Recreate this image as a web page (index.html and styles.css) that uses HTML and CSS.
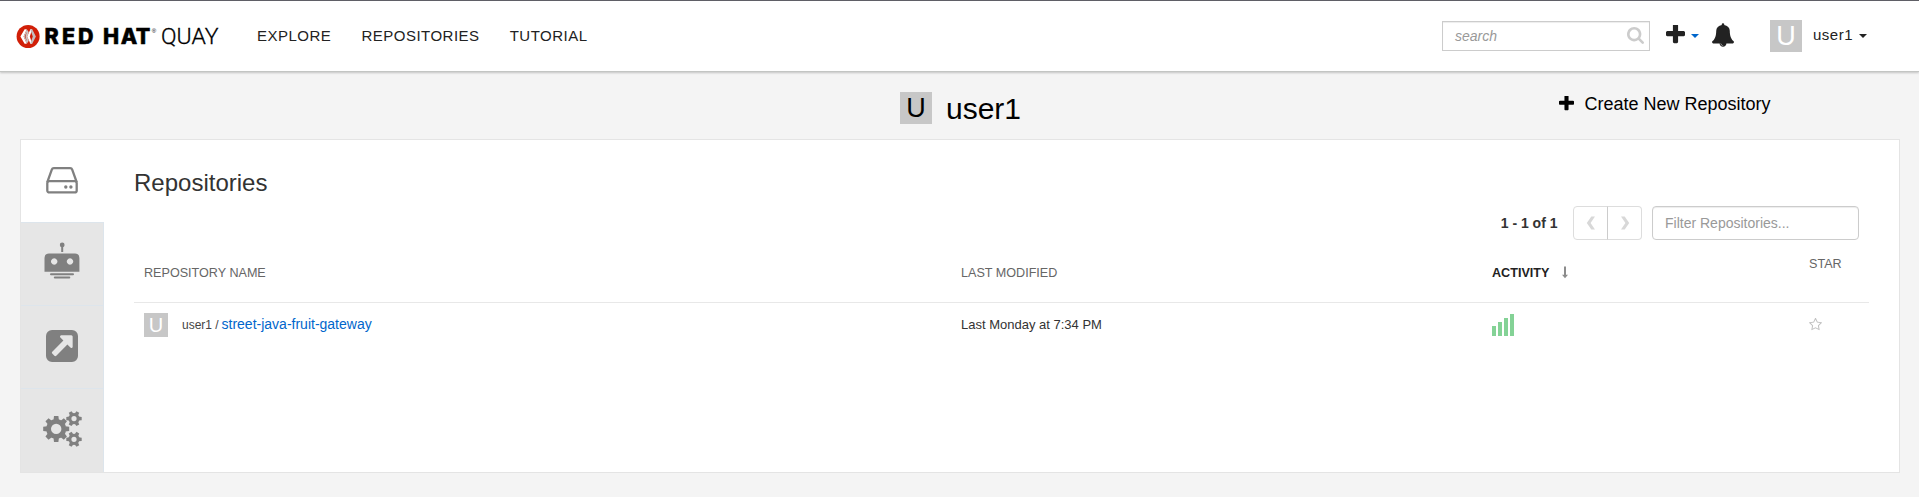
FILE: index.html
```html
<!DOCTYPE html>
<html lang="en">
<head>
<meta charset="utf-8">
<title>user1 · Quay</title>
<link rel="stylesheet" href="styles.css">
</head>
<body>
<svg width="0" height="0" class="defs">
  <symbol id="plus" viewBox="192 192 1408 1408"><path d="M1600 736v192q0 40-28 68t-68 28h-416v416q0 40-28 68t-68 28h-192q-40 0-68-28t-28-68v-416h-416q-40 0-68-28t-28-68v-192q0-40 28-68t68-28h416v-416q0-40 28-68t68-28h192q40 0 68 28t28 68v416h416q40 0 68 28t28 68z"/></symbol>
</svg>
<header class="header">
  <a class="logo">
    <svg width="210" height="30" viewBox="10 21 210 30">
      <circle cx="28.1" cy="36.5" r="11.5" fill="#d11f08"/>
      <path d="M24.600 29.300h2.200l-3.200 7.200 3.200 7.200h-2.200l-4.200-7.200z" fill="#fff"/>
      <path d="M26.800 29.300l2 3-1.600 4.200 1.600 4.200-2 3-3.200-7.200z" fill="#c9c4c4"/>
      <path d="M27 31.500l-1.500 5 1.500 5-2.300-5z" fill="#d11f08"/>
      <path d="M30.400 29.300h1.800l-2.400 7.200 2.400 7.200h-1.800l-3.200-7.200z" fill="#fff"/>
      <path d="M32.200 29.300l3.700 7.200-3.700 7.200h-2l2.600-7.200-2.600-7.200z" fill="#c5bfbf"/>
      <text x="44.500 62 78" y="44" class="logo-bold">RED</text>
      <text x="103 120.800 135.700" y="44" class="logo-bold">HAT</text>
      <text x="151.7" y="33" class="logo-reg">®</text>
      <text x="161" y="44" class="logo-thin" textLength="57.5" lengthAdjust="spacingAndGlyphs">QUAY</text>
    </svg>
  </a>
  <nav class="nav"><a>EXPLORE</a><a>REPOSITORIES</a><a>TUTORIAL</a></nav>
  <div class="search">
    <span>search</span>
    <svg width="17" height="17" viewBox="64 128 1664 1664"><path fill="#ccc" d="M1216 832q0-185-131.5-316.5t-316.5-131.5-316.5 131.5-131.5 316.5 131.5 316.5 316.5 131.5 316.5-131.5 131.5-316.5zm512 832q0 52-38 90t-90 38q-54 0-90-38l-343-342q-179 124-399 124-143 0-273.5-55.5t-225-150-150-225-55.5-273.5 55.5-273.5 150-225 225-150 273.5-55.5 273.5 55.5 225 150 150 225 55.5 273.5q0 220-124 399l343 343q37 37 37 90z"/></svg>
  </div>
  <svg class="add" width="19" height="19"><use href="#plus"/></svg>
  <i class="caret caret-blue"></i>
  <svg class="bell" width="22" height="24" viewBox="64 0 1664 1792"><path d="M912 1696q0-16-16-16-59 0-101.5-42.5t-42.5-101.5q0-16-16-16t-16 16q0 73 51.5 124.5t124.5 51.5q16 0 16-16zm816-288q0 52-38 90t-90 38h-448q0 106-75 181t-181 75-181-75-75-181h-448q-52 0-90-38t-38-90q50-42 91-88t85-119.5 74.5-158.5 50-206 19.5-260q0-152 117-282.5t307-158.5q-8-19-8-39 0-40 28-68t68-28 68 28 28 68q0 20-8 39 190 28 307 158.5t117 282.5q0 139 19.5 260t50 206 74.5 158.5 85 119.5 91 88z"/></svg>
  <span class="avatar avatar-menu">U</span>
  <span class="account">user1</span>
  <i class="caret caret-dark"></i>
</header>

<div class="titlebar">
  <div></div>
  <h1 class="title"><span class="avatar avatar-title">U</span>user1</h1>
  <a class="create"><svg width="15" height="15"><use href="#plus"/></svg>Create New Repository</a>
</div>

<main class="panel">
  <aside class="tabs">
    <a class="tab active">
      <svg width="32" height="27" viewBox="0 0 32 27" fill="none" stroke="#808080" stroke-width="2.300"><path d="M1.3 15.2L5.8 2.6Q6.3 1.2 7.8 1.2h16.4q1.5 0 2 1.4L30.7 15.2"/><rect x="1.3" y="14.2" width="29.4" height="11.2" rx="2"/><g fill="#808080" stroke="none"><circle cx="19.8" cy="20" r="1.7"/><circle cx="24.9" cy="20" r="1.7"/></g></svg>
    </a>
    <a class="tab robot">
      <svg width="36" height="37" viewBox="0 0 36 37" fill="#808080"><circle cx="18.2" cy="2.900" r="2.4"/><path d="M17.2 4h2v6h-2z"/><path fill-rule="evenodd" d="M5 11.5h26q4.4 0 4.4 4.4V29.8H.5V15.9Q.5 11.500 5 11.500zM10.200 16.300a3.200 3.200 0 1 0 .01 0zM26 16.300a3.200 3.200 0 1 0 .01 0z"/><rect x="6" y="31.200" width="24" height="2" rx="1"/><rect x="9.800" y="34.600" width="16.500" height="2" rx="1"/></svg>
    </a>
    <a class="tab">
      <svg width="32" height="32" viewBox="128 128 1536 1536" fill="#808080"><path d="M1408 928v-480q0-26-19-45t-45-19h-480q-42 0-59 39-17 41 14 70l144 144-534 534q-19 19-19 45t19 45l102 102q19 19 45 19t45-19l534-534 144 144q18 19 45 19 12 0 25-5 39-17 39-59zm256-512v960q0 119-84.5 203.5t-203.5 84.500h-960q-119 0-203.500-84.500t-84.500-203.500v-960q0-119 84.500-203.500t203.500-84.500h960q119 0 203.500 84.500t84.500 203.500z"/></svg>
    </a>
    <a class="tab last">
      <svg width="39" height="36" viewBox="0 0 39 36" fill="#808080">
        <defs>
          <path id="bt" d="M-2.700-9l.5-4h4.400l.5 4z"/>
          <g id="big"><circle r="7.600" fill="none" stroke="#808080" stroke-width="4.800"/><use href="#bt"/><use href="#bt" transform="rotate(45)"/><use href="#bt" transform="rotate(90)"/><use href="#bt" transform="rotate(135)"/><use href="#bt" transform="rotate(180)"/><use href="#bt" transform="rotate(225)"/><use href="#bt" transform="rotate(270)"/><use href="#bt" transform="rotate(315)"/></g>
          <path id="st" d="M-2-4.500l.4-3.200h3.200l.4 3.200z"/>
          <g id="small"><circle r="4.100" fill="none" stroke="#808080" stroke-width="3"/><use href="#st" transform="rotate(30)"/><use href="#st" transform="rotate(90)"/><use href="#st" transform="rotate(150)"/><use href="#st" transform="rotate(210)"/><use href="#st" transform="rotate(270)"/><use href="#st" transform="rotate(330)"/></g>
        </defs>
        <use href="#big" x="13.200" y="17.900"/><use href="#small" x="31" y="7.600"/><use href="#small" x="31" y="28.300"/>
      </svg>
    </a>
  </aside>
  <section class="content">
    <h2>Repositories</h2>
    <div class="tools">
      <b>1 - 1 of 1</b>
      <div class="pager">
        <span><svg width="10" height="14" viewBox="0 0 10 14"><path d="M5.300 .5H9L4.600 7 9 13.500H5.300L.8 7z"/></svg></span>
        <span><svg width="10" height="14" viewBox="0 0 10 14"><path d="M4.700 .5H1L5.400 7 1 13.500H4.700L9.200 7z"/></svg></span>
      </div>
      <div class="filter">Filter Repositories...</div>
    </div>
    <div class="row head">
      <span>REPOSITORY NAME</span>
      <span>LAST MODIFIED</span>
      <span class="sorted">ACTIVITY<svg width="6" height="13" viewBox="0 0 6 13"><path d="M2 .5h2v8.200h2L3 12.300 0 8.700h2z" fill="#8c8c8c"/></svg></span>
      <span class="star-head">STAR</span>
    </div>
    <div class="row body">
      <span class="repo"><span class="avatar avatar-row">U</span><span class="ns">user1 /&nbsp;</span><a class="link">street-java-fruit-gateway</a></span>
      <span>Last Monday at 7:34 PM</span>
      <span class="bars"><i></i><i></i><i></i><i></i></span>
      <span class="star"><svg width="13" height="13" viewBox="64 90 1664 1600"><path fill="#c0c0c0" d="M1201 1004l306-297-422-62-189-382-189 382-422 62 306 297-73 421 378-199 377 199zm527-357q0 22-26 48l-363 354 86 500q1 7 1 20 0 50-41 50-19 0-40-12l-449-236-449 236q-22 12-40 12-21 0-31.500-14.500t-10.500-35.500q0-6 2-20l86-500-364-354q-25-27-25-48 0-37 56-46l502-73 225-455q19-41 49-41t49 41l225 455 502 73q56 9 56 46z"/></svg></span>
    </div>
  </section>
</main>
</body>
</html>
```

FILE: styles.css
```css
* { box-sizing: border-box; }
body { margin: 0; height: 497px; overflow: hidden; background: #f4f4f4; color: #333; font: 14px/20px "Liberation Sans", Arial, sans-serif; }
svg { display: block; flex: none; }
.defs { position: absolute; }

.header { display: flex; align-items: flex-start; height: 72px; background: #fff; border-top: 1px solid #5f5f66; border-bottom: 1px solid #c3c5c3; box-shadow: 0 1px 2px rgba(0, 0, 0, .2); color: #222; }
.logo { margin: 20px 0 0 10px; }
.logo-bold { font: 800 21.500px Inter, sans-serif; stroke: #000; stroke-width: .5px; }
.logo-thin { font: 300 22.500px Roboto, sans-serif; stroke: #000; stroke-width: .3px; }
.logo-reg { font: 6px "Liberation Sans", sans-serif; }
.nav { display: flex; gap: 30px; margin: 25px 0 0 37px; font-size: 15px; letter-spacing: .5px; }
.search { display: flex; align-items: center; justify-content: space-between; width: 208px; height: 30px; margin: 20px 0 0 auto; padding: 0 5px 0 12px; border: 1px solid #ccc; box-shadow: inset 0 1px 1px rgba(0, 0, 0, .075); color: #999; font-style: italic; }
.search svg { margin-bottom: 2px; }
.add { margin: 24px 0 0 16px; fill: #222; }
.caret { width: 0; height: 0; border: 4px solid transparent; border-bottom: 0; }
.caret-blue { margin: 33px 0 0 6px; border-top-color: #0066cc; }
.bell { margin: 22px 0 0 13px; fill: #222; }
.avatar { display: block; flex: none; text-align: center; background: #c7c7c7; color: #fff; }
.avatar-menu { width: 32px; height: 32px; margin: 19px 0 0 36px; font-size: 27px; line-height: 32px; }
.account { width: 40px; margin: 24px 0 0 11px; font-size: 15px; letter-spacing: .5px; }
.caret-dark { margin: 33px 52px 0 6px; border-top-color: #222; }

.titlebar { display: grid; grid-template-columns: 1fr auto 1fr; height: 67px; color: #000; }
.title { display: flex; margin: 20px -1px 0 1px; font-size: 30px; font-weight: 400; line-height: 34px; }
.avatar-title { width: 32px; height: 32px; margin-right: 14px; color: #000; font-size: 27px; line-height: 32px; }
.create { display: flex; justify-self: end; gap: 10px; margin: 22px 148.500px 0 0; font-size: 18px; line-height: 20px; }
.create svg { margin-top: 2px; }

.panel { display: flex; width: 1880px; height: 334px; margin: 0 0 0 20px; background: #fff; border: 1px solid #e4e4e4; }
.tabs { flex: none; width: 83px; }
.tab { display: flex; align-items: center; justify-content: center; height: 83px; padding-bottom: 2px; background: #e6e6e6; border-top: 1px solid #dde5ec; border-right: 1px solid #dde5ec; }
.tab.active { height: 82px; background: #fff; border-color: #fff; }
.tab.robot { padding-bottom: 7px; }
.tab.last { height: 84px; padding: 0 0 3px; }
.content { width: 1735px; margin-left: 30px; padding-top: 29px; }
h2 { margin: 0; font-size: 24px; font-weight: 400; line-height: 27px; }
.tools { display: flex; align-items: center; justify-content: flex-end; height: 34px; margin: 10px 10px 0 0; }
.pager { display: flex; height: 34px; margin: 0 10px 0 15.500px; }
.pager span { display: flex; align-items: center; justify-content: center; width: 35px; border: 1px solid #ddd; border-radius: 4px 0 0 4px; }
.pager span + span { margin-left: -1px; border-left-color: #ccc; border-radius: 0 4px 4px 0; }
.pager path { fill: #d8d8d8; }
.filter { width: 207px; height: 34px; padding: 6px 12px; border: 1px solid #ccc; border-radius: 4px; box-shadow: inset 0 1px 1px rgba(0, 0, 0, .075); color: #999; }
.row { display: grid; grid-template-columns: 817px 531px 317px 1fr; padding-left: 10px; }
.head { height: 63px; padding-top: 23px; border-bottom: 1px solid #e8e8e8; color: #666; font-size: 12.600px; }
.sorted { display: flex; gap: 13px; color: #222; font-weight: 700; }
.sorted svg { margin-top: 3px; }
.star-head { margin-top: -9px; }
.body { padding-top: 10px; font-size: 13px; line-height: 24px; }
.repo { display: flex; }
.avatar-row { width: 24px; height: 24px; margin-right: 14px; font-size: 20px; line-height: 24px; }
.ns { font-size: 12px; color: #444; }
.link { margin-left: -.5px; font-size: 14px; line-height: 22px; color: #0066cc; }
.bars { display: flex; align-items: flex-end; gap: 2px; height: 23px; }
.bars i { width: 4px; height: 10px; background: #84d296; }
.bars i:nth-child(2) { height: 14px; }
.bars i:nth-child(3) { height: 18px; }
.bars i:nth-child(4) { height: 22px; }
.star svg { margin-top: 5px; }
```
